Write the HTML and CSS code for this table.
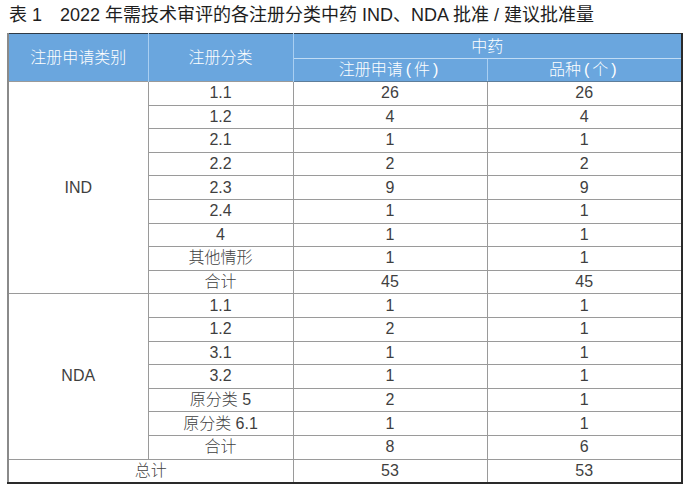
FILE: index.html
```html
<!DOCTYPE html>
<html lang="zh-CN">
<head>
<meta charset="utf-8">
<link rel="stylesheet" href="styles.css">
</head>
<body>
<h1 class="title">表 1　2022 年需技术审评的各注册分类中药 IND、NDA 批准 / 建议批准量</h1>
<table class="data">
  <colgroup>
    <col class="c1"><col class="c2"><col class="c3"><col class="c4">
  </colgroup>
  <thead>
    <tr class="h1"><th rowspan="2">注册申请类别</th><th rowspan="2">注册分类</th><th colspan="2">中药</th></tr>
    <tr class="h2"><th>注册申请<span class="paren">(</span>件<span class="paren">)</span></th><th>品种<span class="paren">(</span>个<span class="paren">)</span></th></tr>
  </thead>
  <tbody>
    <tr><td rowspan="9">IND</td><td>1.1</td><td>26</td><td>26</td></tr>
    <tr><td>1.2</td><td>4</td><td>4</td></tr>
    <tr><td>2.1</td><td>1</td><td>1</td></tr>
    <tr><td>2.2</td><td>2</td><td>2</td></tr>
    <tr><td>2.3</td><td>9</td><td>9</td></tr>
    <tr><td>2.4</td><td>1</td><td>1</td></tr>
    <tr><td>4</td><td>1</td><td>1</td></tr>
    <tr><td>其他情形</td><td>1</td><td>1</td></tr>
    <tr><td>合计</td><td>45</td><td>45</td></tr>
    <tr><td rowspan="7">NDA</td><td>1.1</td><td>1</td><td>1</td></tr>
    <tr><td>1.2</td><td>2</td><td>1</td></tr>
    <tr><td>3.1</td><td>1</td><td>1</td></tr>
    <tr><td>3.2</td><td>1</td><td>1</td></tr>
    <tr><td>原分类 5</td><td>2</td><td>1</td></tr>
    <tr><td>原分类 6.1</td><td>1</td><td>1</td></tr>
    <tr><td>合计</td><td>8</td><td>6</td></tr>
    <tr><td colspan="2">总计</td><td>53</td><td>53</td></tr>
  </tbody>
</table>
</body>
</html>
```
FILE: styles.css
```css
html, body {
  margin: 0;
  padding: 0;
  background: #ffffff;
}
body {
  font-family: "Liberation Sans", "Noto Sans CJK SC", sans-serif;
  color: #3f3f3f;
}
.title {
  margin: 0;
  padding: 0 0 0 9px;
  height: 33px;
  font-size: 18px;
  line-height: 30px;
  font-weight: normal;
  color: #1e1e1e;
}
.data {
  margin-left: 7px;
  width: 674px;
  border-collapse: collapse;
  table-layout: fixed;
  border-top: 1px solid #2e3a46;
  border-right: 2px solid #2a2a2a;
  border-bottom: 2px solid #2a2a2a;
  border-left: 2px solid #8a8a8a;
}
.c1 { width: 140px; }
.c2 { width: 145px; }
.c3 { width: 194px; }
.c4 { width: 195px; }
.data th {
  background: #6aa6de;
  color: #ffffff;
  font-weight: 300;
  font-size: 16px;
  padding: 0;
  text-align: center;
  border-left: 1px solid #a9cff2;
  border-right: 1px solid #a9cff2;
}
.paren {
  padding: 0 3px;
}
.data .h1 th { height: 23px; line-height: 20px; padding-top: 1px; }
.data .h1 th[colspan] { border-bottom: 1px solid #c0dcf5; }
.data .h2 th { height: 22px; line-height: 20px; border-bottom: 1px solid #5f7e9a; }
.data td {
  font-size: 16px;
  font-weight: 300;
  text-align: center;
  padding: 0;
  height: 22.6px;
  line-height: 20px;
  border: 1px solid #9a9a9a;
}
```
